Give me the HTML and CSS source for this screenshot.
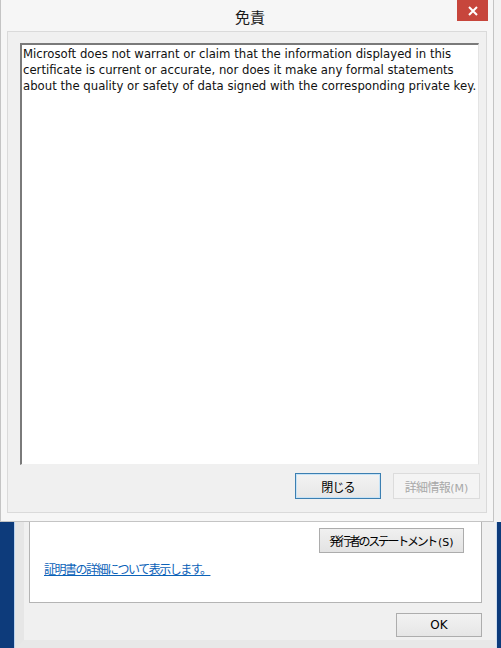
FILE: index.html
```html
<!DOCTYPE html>
<html lang="ja">
<head>
<meta charset="utf-8">
<link rel="stylesheet" href="styles.css">
</head>
<body>
<div class="screen">
  <div class="dialog">
    <div class="titlebar">
      <span class="title">免責</span>
      <button class="close" aria-label="閉じる">
        <svg width="12" height="10" viewBox="0 0 12 10"><path d="M2 1 L10 9 M10 1 L2 9" stroke="#fff" stroke-width="2"/></svg>
      </button>
    </div>
    <div class="client">
      <div class="textbox">Microsoft does not warrant or claim that the information displayed in this<br>certificate is current or accurate, nor does it make any formal statements<br>about the quality or safety of data signed with the corresponding private key.</div>
      <div class="buttons">
        <button class="btn default">閉じる</button>
        <button class="btn disabled"><span class="kana">詳細情報</span><span class="acc">(M)</span></button>
      </div>
    </div>
  </div>
  <div class="lower">
    <div class="blue-left"></div>
    <div class="win">
      <div class="panel">
        <div class="panel-row">
          <button class="btn stmt"><span class="kana">発行者のステートメント</span><span class="acc">(S)</span></button>
        </div>
        <a class="link" href="#">証明書の詳細について表示します。</a>
      </div>
      <div class="ok-row">
        <button class="btn ok">OK</button>
      </div>
    </div>
    <div class="blue-right"></div>
  </div>
</div>
</body>
</html>
```

FILE: styles.css
```css
* { box-sizing: border-box; }
html, body { margin: 0; padding: 0; }
body {
  width: 501px;
  height: 648px;
  overflow: hidden;
  background: #f2f2f2;
  font-family: "Noto Sans CJK JP", "Noto Sans", sans-serif;
  font-size: 12px;
  color: #000;
}
.screen { display: flex; flex-direction: column; width: 501px; height: 648px; }

.dialog {
  width: 494px;
  height: 522px;
  background: #f6f6f6;
  border: 1px solid #c4c4c4;
  border-top: none;
  padding: 0 6px 8px 6px;
  display: flex;
  flex-direction: column;
}
.titlebar {
  height: 31px;
  display: flex;
  align-items: flex-start;
  padding-left: 30px;
}
.title {
  flex: 1;
  text-align: center;
  font-size: 15px;
  line-height: 33px;
  color: #1a1a1a;
  padding-left: 6px;
}
.close {
  width: 31px;
  height: 21px;
  margin-right: -1px;
  border: none;
  background: #c7463c;
  padding: 0;
  display: flex;
  align-items: center;
  justify-content: center;
}
.client {
  flex: 1;
  background: #f0f0f0;
  border: 1px solid #dadada;
  padding: 11px 7px 0 12px;
  display: flex;
  flex-direction: column;
}
.textbox {
  width: 459px;
  height: 422px;
  background: #fff;
  border-top: 2px solid #7a7a7a;
  border-left: 2px solid #7a7a7a;
  border-right: 1px solid #e4e4e4;
  border-bottom: 1px solid #f0f0f0;
  padding: 1px 0 0 1px;
  font-family: "DejaVu Sans", sans-serif;
  font-size: 11.7px;
  line-height: 16px;
  white-space: nowrap;
  color: #111;
}
.buttons {
  display: flex;
  justify-content: flex-end;
  gap: 12px;
  margin-top: 8px;
  width: 460px;
}
.btn {
  font-family: "Noto Sans CJK JP", sans-serif;
  font-size: 12px;
  height: 26px;
  padding: 0;
  white-space: nowrap;
  letter-spacing: -0.8px;
  background: linear-gradient(#f2f2f2, #e6e6e6);
  border: 1px solid #acacac;
  color: #000;
}
.btn .acc {
  font-family: "DejaVu Sans", sans-serif;
  font-size: 11px;
  letter-spacing: 0;
}
.btn.default {
  width: 86px;
  border: 1px solid #3c7fb1;
  box-shadow: inset 0 0 0 1px #c6e3f7;
  background: linear-gradient(#f3f3f3, #e7e7e7);
}
.btn.disabled {
  width: 87px;
  color: #a8a8a8;
  background: #f4f4f4;
  border-color: #dcdcdc;
}
.btn.disabled .kana { letter-spacing: -0.6px; }

.lower { display: flex; height: 126px; }
.blue-left {
  width: 15px;
  background: #0d3b7b;
  border-right: 1px solid #b9d2ee;
}
.blue-right {
  width: 5px;
  background: #0d3b7b;
  border-left: 1px solid #cfdff0;
}
.win {
  flex: 1;
  background: #f0f0f0;
  border-left: 9px solid #e6e6e6;
  padding: 0 14px 0 5px;
  border-bottom: 8px solid #e8e8e8;
}
.panel {
  height: 81px;
  background: #fff;
  border: 1px solid #b4b4b4;
  border-top: none;
  padding: 6px 17px 0 14px;
}
.panel-row { display: flex; justify-content: flex-end; }
.btn.stmt {
  width: 145px;
  height: 25px;
  font-size: 12px;
  background: linear-gradient(#f0f0f0, #e3e3e3);
}
.btn.stmt .kana { letter-spacing: -2.3px; margin-right: 2px; }
.link {
  display: inline-block;
  margin-top: 7px;
  color: #0b62b8;
  font-size: 12px;
  letter-spacing: -1.5px;
  text-decoration: underline;
}
.ok-row { display: flex; justify-content: flex-end; margin-top: 10px; }
.btn.ok {
  width: 86px;
  height: 24px;
  font-family: "DejaVu Sans", sans-serif;
  font-size: 12px;
  letter-spacing: 0;
  background: linear-gradient(#f2f2f2, #e6e6e6);
  border-color: #adadad;
}
```
